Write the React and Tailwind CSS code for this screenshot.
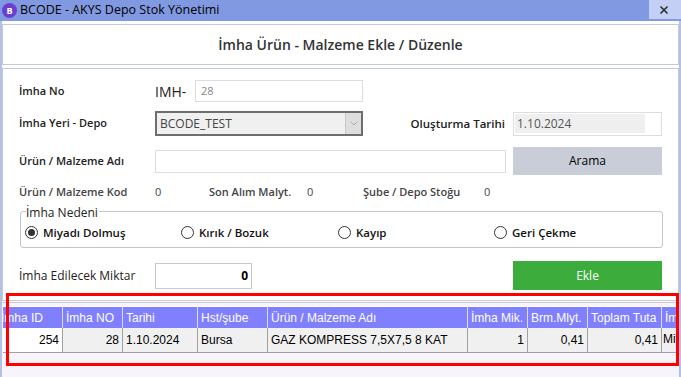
import { X } from "lucide-react";

const cols = [
    { title: "İmha ID", w: "w-[65px]", val: "254", right: true, first: true },
    { title: "İmha NO", w: "w-[60px]", val: "28", right: true },
    { title: "Tarihi", w: "w-[75px]", val: "1.10.2024" },
    { title: "Hst/şube", w: "w-[70px]", val: "Bursa" },
    { title: "Ürün / Malzeme Adı", w: "w-[200px]", val: "GAZ KOMPRESS 7,5X7,5 8 KAT" },
    { title: "İmha Mik.", w: "w-[60px]", val: "1", right: true },
    { title: "Brm.Mlyt.", w: "w-[60px]", val: "0,41", right: true },
    { title: "Toplam Tuta", w: "w-[74px]", val: "0,41", right: true },
    { title: "İmha Nedeni", w: "w-[90px]", val: "Miyadı Dolmuş", top: true },
];

function Radio({ checked, label, className }) {
    return (
        <div className={"flex items-center gap-[5px] " + (className || "")}>
            <span className="w-[13px] h-[13px] rounded-full border border-[#333] bg-white flex items-center justify-center">
                {checked && <span className="w-[7px] h-[7px] rounded-full bg-[#333]"></span>}
            </span>
            <span className="text-[11.5px] font-semibold text-[#111]">{label}</span>
        </div>
    );
}

export default function App() {
    return (
        <div className="w-[681px] h-[377px] overflow-hidden bg-white relative font-['Open_Sans',sans-serif]">
            {/* Başlık çubuğu */}
            <div className="h-[21px] bg-[#8099e0] flex items-center">
                <span className="ml-[2px] w-[15px] h-[15px] rounded-full bg-[#6a3fd0] flex items-center justify-center text-white text-[9px] font-bold leading-none">B</span>
                <span className="ml-[3px] text-[12.5px] text-black leading-none">BCODE - AKYS Depo Stok Yönetimi</span>
                <div className="ml-auto w-[32px] h-[19px] self-start bg-[#c3cff5] flex items-center justify-center pr-[3px]">
                    <X size={12} strokeWidth={3.5} color="#333" />
                </div>
            </div>

            <div className="border-l-2 border-r-2 border-[#b4c0e4] h-[356px] flex flex-col">
                {/* Form başlığı */}
                <div className="mt-[3px] h-[41px] border border-[#c4cad8] flex items-center justify-center">
                    <span className="text-[14px] font-semibold text-[#333]">İmha Ürün - Malzeme Ekle / Düzenle</span>
                </div>

                {/* Ana panel */}
                <div className="mt-[3px] border border-[#c4cad8] pl-[16px] pb-[10px] flex flex-col text-[11px] font-semibold text-[#222]">
                    <div className="mt-[11px] h-[22px] flex items-center">
                        <span className="w-[136px] pt-[1px]">İmha No</span>
                        <span className="w-[40px] text-[14px] font-normal text-[#222]">IMH-</span>
                        <div className="w-[168px] h-[22px] border border-[#dcdde4] flex items-center pl-[5px] text-[11px] font-normal text-[#888]">28</div>
                    </div>

                    <div className="mt-[9px] h-[25px] flex items-center">
                        <span className="w-[136px]">İmha Yeri - Depo</span>
                        <div className="w-[208px] h-[25px] border-2 border-[#6e6e6e] bg-[#f0f0f0] flex items-center">
                            <span className="pl-[3px] text-[12px] font-normal text-[#444] flex-1">BCODE_TEST</span>
                            <div className="w-[16px] h-[21px] bg-[#dedede] border-l border-[#c8c8c8] flex items-center justify-center">
                                <svg width="8" height="5" viewBox="0 0 8 5"><path d="M0.5 0.5 L4 4 L7.5 0.5" stroke="#aaa" fill="none" /></svg>
                            </div>
                        </div>
                        <span className="w-[142px] text-right text-[11.5px] text-[#222]">Oluşturma Tarihi</span>
                        <div className="ml-[8px] w-[149px] h-[24px] border border-[#dcdde4] flex items-center pl-[1px]">
                            <div className="w-[130px] h-[19px] bg-[#efefef] flex items-center pl-[2px] text-[12px] font-normal text-[#555]">1.10.2024</div>
                        </div>
                    </div>

                    <div className="mt-[11px] h-[28px] flex items-center">
                        <span className="w-[136px]">Ürün / Malzeme Adı</span>
                        <div className="w-[351px] h-[23px] border border-[#dcdde4]"></div>
                        <div className="ml-[7px] w-[149px] h-[28px] bg-[#c9cdd8] flex items-center justify-center text-[12px] font-normal text-black">Arama</div>
                    </div>

                    <div className="mt-[8px] h-[18px] flex items-center text-[#444]">
                        <span className="w-[136px]">Ürün / Malzeme Kod</span>
                        <span className="w-[54px] font-normal">0</span>
                        <span className="w-[98px]">Son Alım Malyt.</span>
                        <span className="w-[56px] font-normal">0</span>
                        <span className="w-[121px]">Şube / Depo Stoğu</span>
                        <span className="font-normal">0</span>
                    </div>

                    <div className="mt-[10px] mr-[15px] ml-[1px] h-[37px] border border-[#c4c4c4] rounded-[3px] relative flex items-center pt-[6px] pl-[4px]">
                        <span className="absolute left-[5px] top-[-8px] bg-white pr-[1px] text-[12px] font-normal text-[#222]">İmha Nedeni</span>
                        <Radio checked label="Miyadı Dolmuş" className="w-[156px]" />
                        <Radio label="Kırık / Bozuk" className="w-[157px]" />
                        <Radio label="Kayıp" className="w-[156px]" />
                        <Radio label="Geri Çekme" />
                    </div>

                    <div className="mt-[13px] h-[29px] flex items-center">
                        <span className="w-[136px] text-[12px] font-normal text-[#222]">İmha Edilecek Miktar</span>
                        <div className="w-[97px] h-[26px] border border-[#c8c8d0] flex items-center justify-end pr-[3px] text-[12px] font-bold text-black">0</div>
                        <div className="ml-[261px] w-[149px] h-[29px] bg-[#3cac3c] flex items-center justify-center text-[12px] font-normal text-white">Ekle</div>
                    </div>
                </div>

                {/* Tablo */}
                <div className="flex-1 border-t border-[#c8c8d0] mt-[1px] pt-[3px] bg-[#f8f4fc] overflow-hidden font-['Liberation_Sans',sans-serif] text-[12px]">
                    <div className="ml-[1px] overflow-hidden">
                        <div className="flex ml-[-5px] w-[760px] border-t border-white">
                            {cols.map((c) => (
                                <div key={c.title} className={c.w + " shrink-0 h-[21px] bg-[#8080ff] border-r border-[#dcdcff] text-white flex items-center pl-[3px] whitespace-nowrap overflow-hidden"}>
                                    {c.title}
                                </div>
                            ))}
                        </div>
                        <div className="flex ml-[-5px] w-[760px]">
                            {cols.map((c) => (
                                <div key={c.title} className={c.w + " shrink-0 h-[25px] border-r border-b border-[#a0a0a0] text-black flex whitespace-nowrap overflow-hidden " + (c.first ? "bg-white " : "bg-[#f0f0f0] ") + (c.right ? "justify-end px-[3px] " : c.top ? "pl-[1px] " : "px-[3px] ") + (c.top ? "items-start pt-[2px]" : "items-center")}>
                                    {c.val}
                                </div>
                            ))}
                        </div>
                    </div>
                </div>
            </div>

            {/* Kırmızı işaret kutusu */}
            <div className="absolute left-[6px] top-[293px] w-[673px] h-[73px] border-[3px] border-[#ff0000] pointer-events-none"></div>
        </div>
    );
}
